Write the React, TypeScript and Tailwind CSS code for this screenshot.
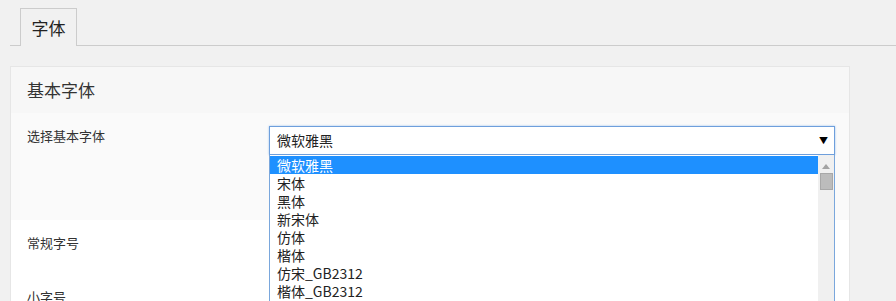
const options = [
  "微软雅黑",
  "宋体",
  "黑体",
  "新宋体",
  "仿体",
  "楷体",
  "仿宋_GB2312",
  "楷体_GB2312",
  "隶书",
  "幼圆",
];

const font = "font-['Noto_Sans_CJK_SC','Noto_Sans',sans-serif]";

export default function App() {
  return (
    <div className={`h-[301px] w-[896px] overflow-hidden bg-[#f1f1f1] text-[#333] ${font}`}>
      {/* tabs */}
      <div className="ml-[10px] flex h-[46px] items-end border-b border-[#cccccc] pl-[10px]">
        <div className="-mb-px flex h-[38px] w-[57px] items-center justify-center border border-b-0 border-[#cccccc] bg-[#f1f1f1] text-[17px] text-[#222]">
          字体
        </div>
      </div>

      {/* card */}
      <div className="ml-[10px] mt-[20px] w-[840px] border border-[#e6e6e6] bg-white">
        <div className="flex h-[46px] items-center bg-[#f7f7f7] px-[16px] text-[17px] text-[#333]">
          基本字体
        </div>

        <div className="flex h-[107px] bg-[#fafafa] px-[16px] pt-[13px]">
          <div className="w-[242px] shrink-0 pt-[1px] text-[13px] leading-[18px]">选择基本字体</div>
          <div className="relative">
            <div className="flex h-[29px] w-[566px] items-center justify-between border border-[#6e9fdc] bg-white pl-[7px] pr-[6px] text-[14px] text-[#222] shadow-[0_0_2px_#9ec3ef]">
              <span>微软雅黑</span>
              <span className="text-[9px] text-black">▼</span>
            </div>
            <div className="absolute left-0 top-[29px] z-10 flex h-[160px] w-[566px] border-x border-[#7aa7dc] bg-white">
              <div className="flex-1 pt-px">
                {options.map((o, i) => (
                  <div
                    key={o}
                    className={`h-[18px] pl-[7px] text-[14px] leading-[18px] ${
                      i === 0 ? "bg-[#1e90ff] text-white" : "text-[#222]"
                    }`}
                  >
                    {o}
                  </div>
                ))}
              </div>
              <div className="flex w-[16px] flex-col items-center bg-[#f0f0f0] pt-[9px]">
                <svg width="8" height="5" viewBox="0 0 8 5">
                  <path d="M4 0 L8 5 L0 5 Z" fill="#a3a3a3" />
                </svg>
                <div className="mt-[4px] h-[17px] w-[13px] border border-[#a8a8a8] bg-[#bcbcbc]" />
              </div>
            </div>
          </div>
        </div>

        <div className="h-[54px] px-[16px] pt-[14px] text-[13px] leading-[18px]">常规字号</div>
        <div className="h-[54px] px-[16px] pt-[14px] text-[13px] leading-[18px]">小字号</div>
      </div>
    </div>
  );
}
